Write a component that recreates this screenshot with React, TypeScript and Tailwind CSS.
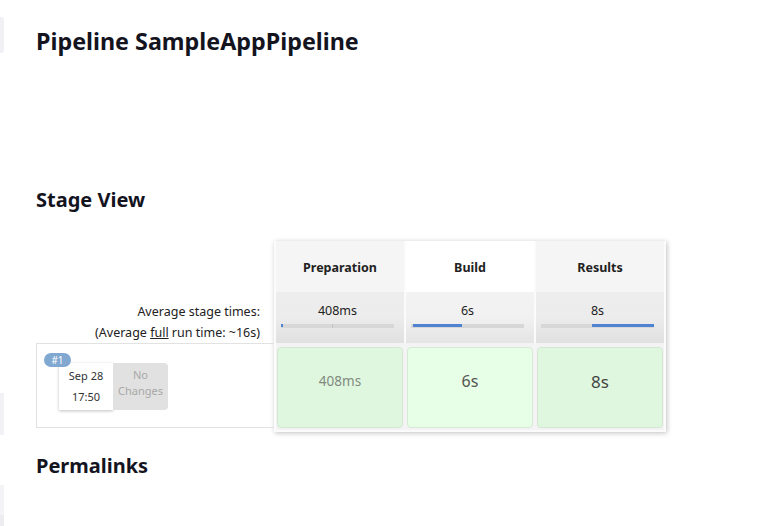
export default function App() {
  const headers = ["Preparation", "Build", "Results"];
  return (
    <div className="flex min-h-[526px] w-[782px] overflow-hidden bg-white font-['Noto_Sans',sans-serif] text-[#14141f]">
      <div className="flex w-[4px] shrink-0 flex-col">
        <div className="mt-[17px] h-[36px] rounded-r-[3px] bg-[#f0f0f5]" />
        <div className="mt-[340px] h-[42px] bg-[#f2f2f6]" />
        <div className="mt-[50px] flex h-[41px] flex-col">
          <div className="h-[30px] bg-[#f4f4f7]" />
          <div className="h-[11px] bg-[#ececf1]" />
        </div>
      </div>
      <div className="flex flex-col pl-[32px]">
        <h1 className="mt-[25px] text-[23.3px] leading-[32px] font-bold">Pipeline SampleAppPipeline</h1>
        <h2 className="mt-[129px] text-[20px] leading-[28px] font-bold">Stage View</h2>
        <div className="mt-[27px] flex">
          <div className="flex w-[238px] flex-col">
            <div className="h-[51px]" />
            <div className="flex h-[51px] flex-col items-end pt-[9px] pr-[14px] text-[12.5px] leading-[21px] text-[#222]">
              <div>Average stage times:</div>
              <div>
                (Average <span className="underline">full</span> run time: ~16s)
              </div>
            </div>
            <div className="relative h-[85px] border border-r-0 border-[#e2e2e2]">
              <div className="absolute top-[9px] left-[7px] flex h-[14px] w-[27px] items-center justify-center rounded-full bg-[#81a8d0] text-[10px] leading-none text-white">
                #1
              </div>
              <div className="flex pt-[19px] pl-[22px]">
                <div className="flex h-[47px] w-[54px] flex-col items-center justify-center gap-[3px] bg-white text-[11px] leading-[18px] text-[#333] shadow-[0_1px_3px_rgba(0,0,0,0.25)]">
                  <div>Sep 28</div>
                  <div>17:50</div>
                </div>
                <div className="flex h-[47px] w-[55px] flex-col items-center justify-start rounded-r-[4px] bg-[#e1e1e1] pt-[4px] text-[11px] leading-[16px] text-[#a8a8a8]">
                  <div>No</div>
                  <div>Changes</div>
                </div>
              </div>
            </div>
          </div>
          <div className="flex w-[392px] flex-col bg-[#fbfbfb] px-[2px] pb-[2px] shadow-[1px_1px_5px_rgba(0,0,0,0.25)]">
            <div className="grid grid-cols-3 gap-x-[2px]">
              {headers.map((h) => (
                <div
                  key={h}
                  className={
                    h === "Build"
                      ? "flex h-[51px] items-center justify-center bg-white pt-[3px] text-[12.5px] font-bold text-[#222]"
                      : "flex h-[51px] items-center justify-center bg-[#f5f5f5] pt-[3px] text-[12.5px] font-bold text-[#222]"
                  }
                >
                  {h}
                </div>
              ))}
            </div>
            <div className="grid grid-cols-3 gap-x-[2px]">
              <div className="flex h-[51px] flex-col bg-gradient-to-b from-[#ededed] via-[#ececec] to-[#e0e0e0] pt-[9px] pl-[5px]">
                <div className="w-[113px] text-center text-[12.5px] leading-[20px] text-[#222]">408ms</div>
                <div className="mt-[3px] flex h-[4px] w-[113px] bg-[#d7d7d7]">
                  <div className="h-[3px] w-[2px] bg-[#4f82d0]" />
                  <div className="ml-[49px] h-[4px] w-[1px] bg-[#c4c4c4]" />
                </div>
              </div>
              <div className="flex h-[51px] flex-col bg-gradient-to-b from-[#f3f3f3] via-[#f1f1f1] to-[#e4e4e4] pt-[9px] pl-[5px]">
                <div className="w-[113px] text-center text-[12.5px] leading-[20px] text-[#222]">6s</div>
                <div className="mt-[3px] flex h-[4px] w-[113px] bg-[#d7d7d7]">
                  <div className="ml-[2px] h-[3px] w-[49px] bg-[#4f82d0]" />
                </div>
              </div>
              <div className="flex h-[51px] flex-col bg-gradient-to-b from-[#ededed] via-[#ececec] to-[#e0e0e0] pt-[9px] pl-[5px]">
                <div className="w-[113px] text-center text-[12.5px] leading-[20px] text-[#222]">8s</div>
                <div className="mt-[3px] flex h-[4px] w-[113px] bg-[#d7d7d7]">
                  <div className="ml-[51px] h-[3px] w-[62px] bg-[#4f82d0]" />
                </div>
              </div>
            </div>
            <div className="grid grid-cols-3 gap-x-[2px] bg-[#f4f4f4]">
              <div className="bg-[#f3f3f3] px-[1px] pt-[4px] pb-[2px]">
                <div className="flex h-[81px] items-center justify-center rounded-[4px] border border-[#d3e6d3] bg-[#dff7df] pb-[13px] text-[13.5px] text-[#7f8a7f]">
                  408ms
                </div>
              </div>
              <div className="bg-[#f3f3f3] px-[1px] pt-[4px] pb-[2px]">
                <div className="flex h-[81px] items-center justify-center rounded-[4px] border border-[#d6e9d6] bg-[#e6ffe6] pb-[13px] text-[16px] text-[#555]">
                  6s
                </div>
              </div>
              <div className="bg-[#f3f3f3] px-[1px] pt-[4px] pb-[2px]">
                <div className="flex h-[81px] items-center justify-center rounded-[4px] border border-[#d3e6d3] bg-[#dff7df] pb-[12px] text-[17px] text-[#444]">
                  8s
                </div>
              </div>
            </div>
          </div>
        </div>
        <h2 className="mt-[20px] text-[20px] leading-[28px] font-bold">Permalinks</h2>
      </div>
    </div>
  );
}
